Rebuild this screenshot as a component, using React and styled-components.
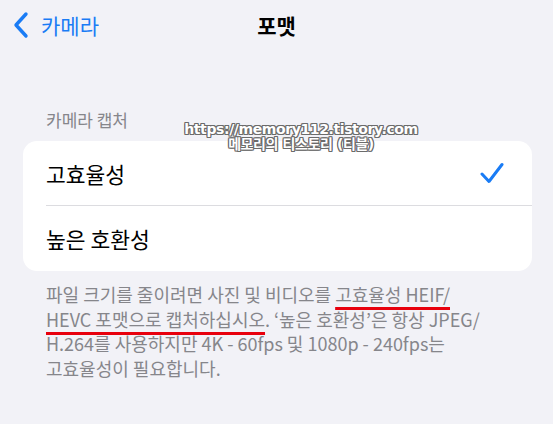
import React from "react";
import styled, { createGlobalStyle } from "styled-components";

const GlobalStyle = createGlobalStyle`
  body {
    margin: 0;
    background: #f2f2f7;
    font-family: "Noto Sans CJK KR", "Noto Sans", sans-serif;
  }
`;

export default function App() {
  return (
    <>
      <GlobalStyle />
      <Page>
        <NavBar>
          <BackButton>
            <svg width="17" height="28" viewBox="0 0 17 28">
              <path d="M14 3 L4 14 L14 25" fill="none" stroke="#1a7cf5" strokeWidth="3.4" strokeLinecap="round" strokeLinejoin="round" />
            </svg>
            <span>카메라</span>
          </BackButton>
          <Title>포맷</Title>
        </NavBar>

        <Section>
          <SectionHeader>카메라 캡처</SectionHeader>
          <Card>
            <Row>
              <span>고효율성</span>
              <svg width="24" height="22" viewBox="0 0 24 22">
                <path d="M2 12 L9 19.5 L22 2.5" fill="none" stroke="#1a7cf5" strokeWidth="3" strokeLinecap="round" strokeLinejoin="round" />
              </svg>
            </Row>
            <Row $last>
              <span>높은 호환성</span>
            </Row>
          </Card>
          <Footer>
            파일 크기를 줄이려면 사진 및 비디오를 <Marked>고효율성 HEIF/</Marked>
            <br />
            <Marked>HEVC 포맷으로 캡처하십시오</Marked>. ‘높은 호환성’은 항상 JPEG/
            <br />
            H.264를 사용하지만 4K - 60fps 및 1080p - 240fps는
            <br />
            고효율성이 필요합니다.
          </Footer>
          <Watermark>
            <div>https://memory112.tistory.com</div>
            <div>메모리의 티스토리 (티블)</div>
          </Watermark>
        </Section>
      </Page>
    </>
  );
}

const Page = styled.div`
  width: 553px;
  height: 424px;
  overflow: hidden;
`;

const NavBar = styled.div`
  position: relative;
  height: 50px;
  display: flex;
  align-items: center;
  padding-left: 12px;
`;

const BackButton = styled.div`
  display: flex;
  align-items: center;
  gap: 12px;
  color: #1a7cf5;
  font-size: 21px;
  svg {
    display: block;
  }
`;

const Title = styled.div`
  position: absolute;
  left: 0;
  right: 0;
  top: 0;
  height: 50px;
  display: flex;
  align-items: center;
  justify-content: center;
  font-size: 21px;
  font-weight: 700;
  color: #000;
  pointer-events: none;
`;

const Section = styled.div`
  position: relative;
  padding: 58px 21px 0 23px;
`;

const SectionHeader = styled.div`
  padding-left: 23px;
  font-size: 17px;
  color: #86868b;
  line-height: 24px;
  margin-bottom: 9px;
`;

const Card = styled.div`
  background: #fff;
  border-radius: 14px;
  overflow: hidden;
`;

const Row = styled.div`
  height: 65px;
  margin-left: 23px;
  padding-right: 28px;
  display: flex;
  align-items: center;
  justify-content: space-between;
  font-size: 21.5px;
  color: #000;
  border-bottom: ${(p) => (p.$last ? "none" : "1px solid #dcdce0")};
  box-sizing: border-box;
`;

const Footer = styled.div`
  padding: 11px 0 0 23px;
  font-size: 18px;
  line-height: 24.5px;
  color: #86868b;
`;

const Marked = styled.span`
  text-decoration: underline;
  text-decoration-color: #e8000d;
  text-decoration-thickness: 3px;
  text-underline-offset: 5px;
`;

const Watermark = styled.div`
  position: absolute;
  left: 178px;
  top: 72px;
  width: 246px;
  text-align: center;
  font-family: "DejaVu Sans", "Noto Sans CJK KR", sans-serif;
  font-weight: 700;
  font-size: 14px;
  line-height: 15px;
  letter-spacing: -0.4px;
  color: #fff;
  text-shadow: -1px -1px 0 #6b6b6b, 1px -1px 0 #6b6b6b, -1px 1px 0 #6b6b6b, 1px 1px 0 #6b6b6b,
    0 1px 0 #6b6b6b, 0 -1px 0 #6b6b6b, 1px 0 0 #6b6b6b, -1px 0 0 #6b6b6b;
`;
